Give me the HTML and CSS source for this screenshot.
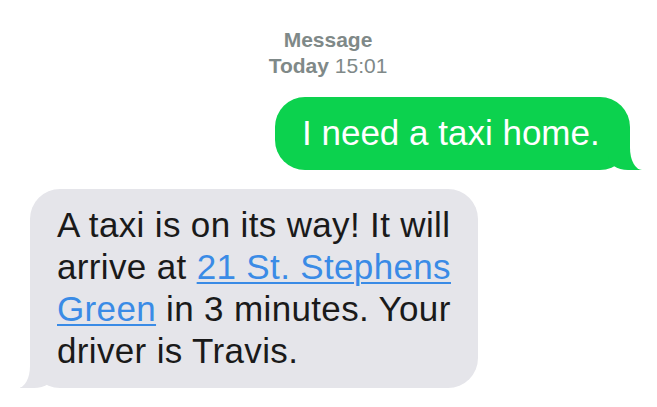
FILE: index.html
```html
<!DOCTYPE html>
<html>
<head>
<meta charset="utf-8">
<link rel="stylesheet" href="styles.css">
</head>
<body>
<div class="thread">
  <div class="stamp">
    <div class="stamp-title">Message</div>
    <div><span class="stamp-day">Today</span> 15:01</div>
  </div>
  <div class="bubble out">I need a taxi home.</div>
  <div class="bubble in">A taxi is on its way! It will<br>arrive at <a class="link" href="#">21 St. Stephens<br>Green</a> in 3 minutes. Your<br>driver is Travis.</div>
</div>
</body>
</html>
```
FILE: styles.css
```css
* { box-sizing: border-box; }
html, body { margin: 0; padding: 0; background: #ffffff; }
body {
  width: 657px;
  height: 407px;
  overflow: hidden;
  font-family: "Liberation Sans", Arial, sans-serif;
}
.thread {
  display: flex;
  flex-direction: column;
  padding-top: 27px;
}
.stamp {
  text-align: center;
  color: #7f8988;
  font-size: 21px;
  line-height: 26px;
  margin-left: -1px;
}
.stamp-title, .stamp-day { font-weight: bold; }
.bubble {
  position: relative;
  font-size: 35px;
  line-height: 42px;
  padding: 15px 20px 16px 27px;
  border-radius: 30px;
  white-space: nowrap;
}
.out {
  align-self: flex-end;
  margin-top: 18px;
  margin-right: 27px;
  width: 355px;
  background: #0cd24e;
  color: #ffffff;
}
.out::before {
  content: "";
  position: absolute;
  right: -12px;
  bottom: 0;
  width: 34px;
  height: 30px;
  background: #0cd24e;
  border-bottom-left-radius: 20px 14px;
}
.out::after {
  content: "";
  position: absolute;
  right: -22px;
  bottom: 0;
  width: 22px;
  height: 30px;
  background: #ffffff;
  border-bottom-left-radius: 12px 22px;
}
.in {
  align-self: flex-start;
  margin-top: 19px;
  margin-left: 30px;
  width: 448px;
  background: #e5e5ea;
  color: #1a1a1a;
  letter-spacing: 0.35px;
}
.in::before {
  content: "";
  position: absolute;
  left: -10px;
  bottom: 0;
  width: 34px;
  height: 30px;
  background: #e5e5ea;
  border-bottom-right-radius: 20px 14px;
}
.in::after {
  content: "";
  position: absolute;
  left: -22px;
  bottom: 0;
  width: 22px;
  height: 30px;
  background: #ffffff;
  border-bottom-right-radius: 12px 22px;
}
.link {
  color: #3a8be6;
  text-decoration: underline;
  text-decoration-thickness: 2px;
  text-underline-offset: 3px;
}
```
